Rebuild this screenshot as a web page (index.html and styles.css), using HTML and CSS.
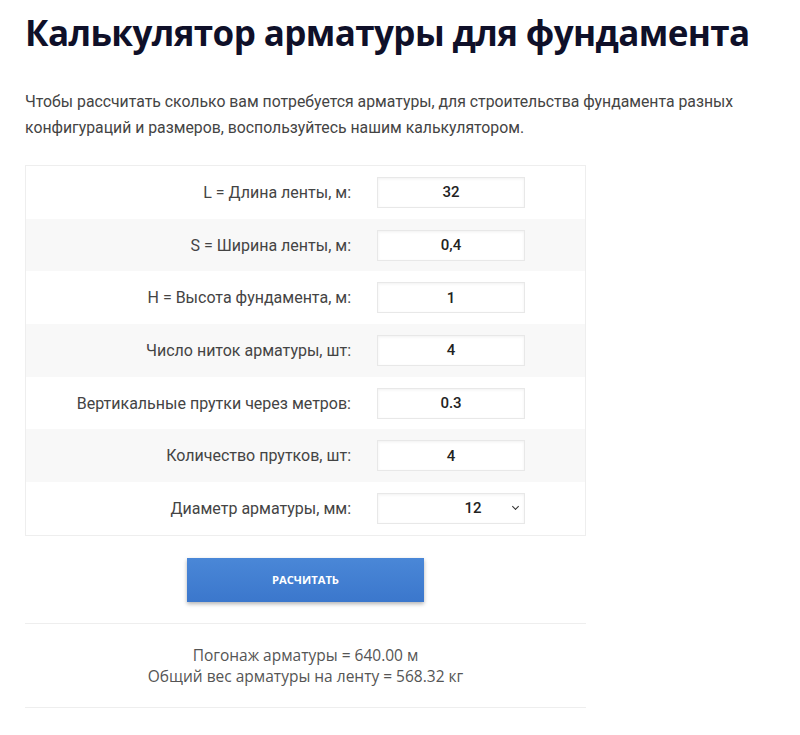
FILE: index.html
```html
<!DOCTYPE html>
<html lang="ru">
<head>
  <meta charset="UTF-8">
  <meta name="viewport" content="width=device-width, initial-scale=1.0">
  <title>Калькулятор арматуры для фундамента</title>
  <link rel="stylesheet" href="styles.css">
</head>
<body>

<h1>Калькулятор арматуры для фундамента</h1>

<p class="intro">Чтобы рассчитать сколько вам потребуется арматуры, для строительства фундамента разных конфигураций и размеров, воспользуйтесь нашим калькулятором.</p>

<form id="calcForm">
  <table class="calc">
    <tr>
      <td class="lbl"><label for="len">L = Длина ленты, м:</label></td>
      <td><input type="text" id="len" value="32"></td>
    </tr>
    <tr>
      <td class="lbl"><label for="wid">S = Ширина ленты, м:</label></td>
      <td><input type="text" id="wid" value="0,4"></td>
    </tr>
    <tr>
      <td class="lbl"><label for="hgt">H = Высота фундамента, м:</label></td>
      <td><input type="text" id="hgt" value="1"></td>
    </tr>
    <tr>
      <td class="lbl"><label for="threads">Число ниток арматуры, шт:</label></td>
      <td><input type="text" id="threads" value="4"></td>
    </tr>
    <tr>
      <td class="lbl"><label for="step">Вертикальные прутки через метров:</label></td>
      <td><input type="text" id="step" value="0.3"></td>
    </tr>
    <tr>
      <td class="lbl"><label for="rods">Количество прутков, шт:</label></td>
      <td><input type="text" id="rods" value="4"></td>
    </tr>
    <tr>
      <td class="lbl"><label for="diam">Диаметр арматуры, мм:</label></td>
      <td>
        <div class="select-wrap">
          <select id="diam">
            <option>6</option>
            <option>8</option>
            <option>10</option>
            <option selected>12</option>
            <option>14</option>
            <option>16</option>
          </select>
        </div>
      </td>
    </tr>
  </table>

  <div class="btn-row">
    <button type="submit">Расчитать</button>
  </div>
</form>

<div class="result">
  <div>Погонаж арматуры = 640.00 м</div>
  <div>Общий вес арматуры на ленту = 568.32 кг</div>
</div>

</body>
</html>
```

FILE: styles.css
```css
body { margin: 0; padding: 0 25px; font-family: Roboto, "Liberation Sans", sans-serif; color: #444; background: #fff; }
h1 { margin: 0; padding-top: 10px; font-family: "Open Sans", "Liberation Sans", sans-serif; font-weight: 700; font-size: 35px; line-height: 46px; color: #0f1029; letter-spacing: -0.6px; }
.intro { margin: 33px 0 24px; font-size: 15.8px; line-height: 26px; color: #444; max-width: 740px; }

.calc { width: 561px; border-collapse: collapse; border: 1px solid #eee; }
.calc td { height: 52.7px; padding: 0; }
.calc tr:nth-child(even) td { background: #f8f8f8; }
.calc td.lbl { width: 325px; padding-right: 14px; text-align: right; font-size: 16px; color: #444; }
.calc td + td { padding-left: 12px; }
.calc input, .calc select { box-sizing: border-box; width: 148px; height: 31px; border: 1px solid #e8e8e8; box-shadow: inset 0 1px 3px rgba(0,0,0,0.06); background: #fff; font-family: Roboto, "Liberation Sans", sans-serif; font-size: 15px; font-weight: 500; color: #222; text-align: center; outline: none; }
.select-wrap { position: relative; width: 148px; }
.calc select { appearance: none; -webkit-appearance: none; padding: 0 0 0 44px; text-align: center; text-align-last: center; }
.select-wrap::after { content: ""; position: absolute; right: 7px; top: 11px; width: 4px; height: 4px; border-right: 1.6px solid #333; border-bottom: 1.6px solid #333; transform: rotate(45deg); pointer-events: none; }

.btn-row { width: 561px; padding: 22px 0 21px; }
.btn-row button { display: block; margin-left: 162px; width: 237px; height: 44px; border: 0; background: linear-gradient(#4a87d7, #3b77cc); color: #fff; font-family: "Open Sans", "Liberation Sans", sans-serif; font-weight: 700; font-size: 11.2px; text-transform: uppercase; box-shadow: 0 2px 4px rgba(0,0,0,0.3); cursor: pointer; }

.result { width: 561px; border-top: 1px solid #eee; border-bottom: 1px solid #eee; padding: 21px 0 20px; text-align: center; font-family: "Open Sans", "Liberation Sans", sans-serif; font-size: 15.5px; line-height: 21px; color: #555; }
```
